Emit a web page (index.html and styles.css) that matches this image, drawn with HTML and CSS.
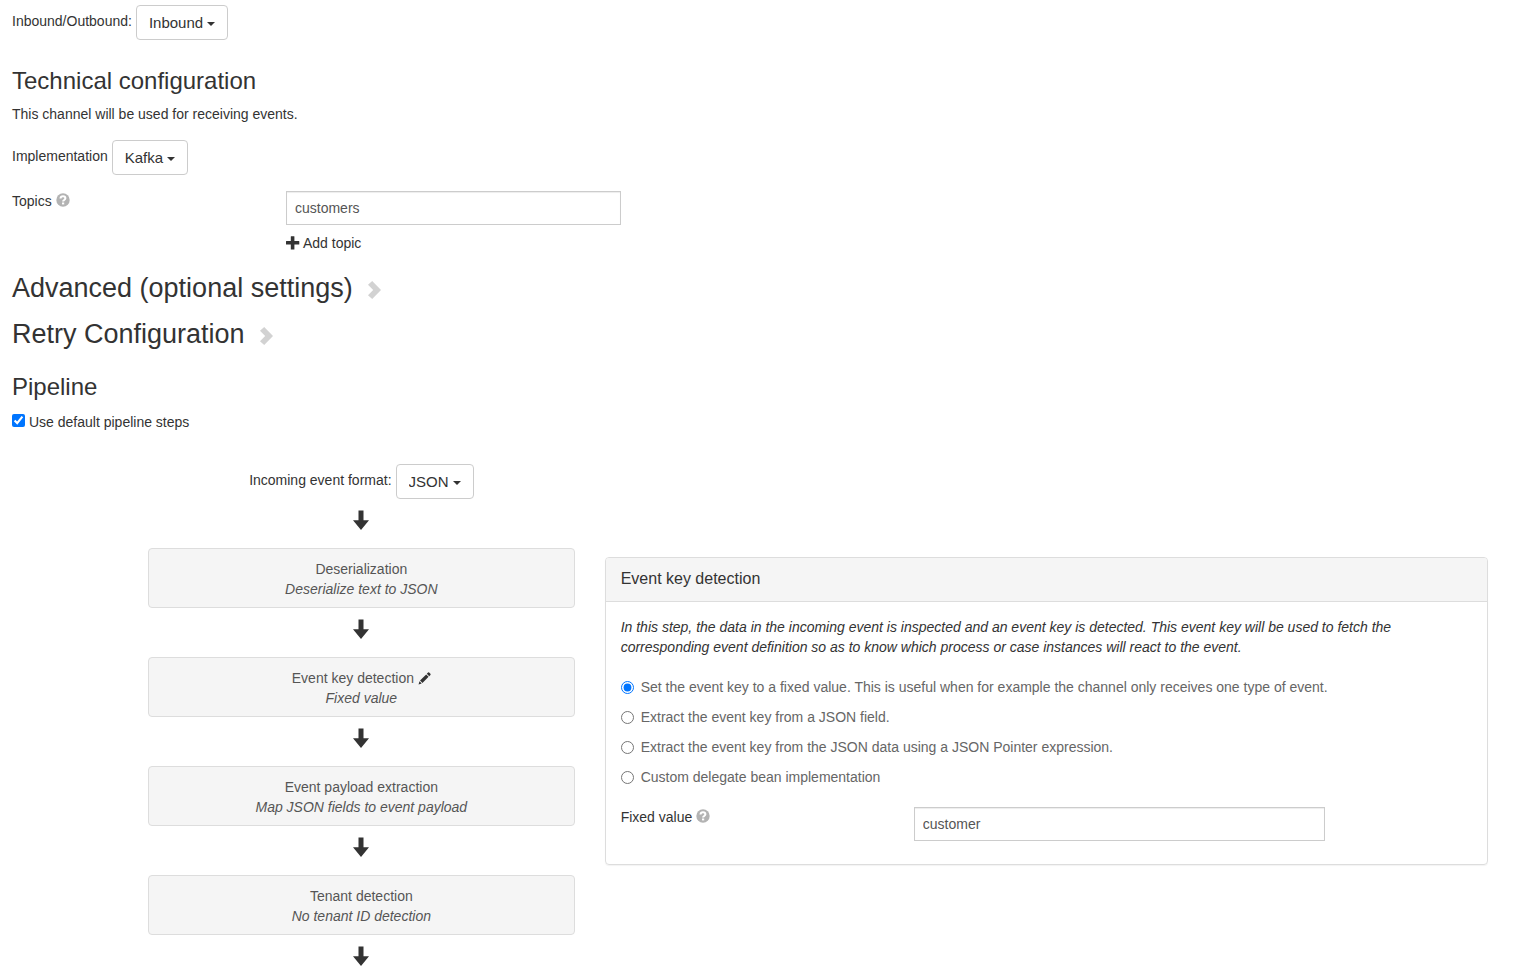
FILE: index.html
```
<!DOCTYPE html>
<html lang="en">
<head>
<meta charset="utf-8">
<title>Channel configuration</title>
<link rel="stylesheet" href="styles.css">
</head>
<body>
<svg class="sprite" aria-hidden="true">
  <symbol id="help" viewBox="0 0 14 14"><circle cx="7" cy="7" r="6.700" fill="#b3b3b3"/><path d="M4.500 5.500C4.600 3.900 5.600 3.200 7 3.200s2.400.8 2.400 2.100c0 1.700-2.300 1.600-2.300 3.200" fill="none" stroke="#fff" stroke-width="2"/><path d="M6 9.500h2.200v1.900H6z" fill="#fff"/></symbol>
  <symbol id="plus" viewBox="0 0 14 14"><path d="M4.800.5q0-.3.300-.3h3q.3 0 .3.300v4.600h4.600q.3 0 .3.300v2.900q0 .3-.3.300H8.400v4.600q0 .3-.3.300h-3q-.3 0-.3-.3V8.600H.3Q0 8.600 0 8.300V5.400q0-.3.300-.3h4.500z"/></symbol>
  <symbol id="chevron" viewBox="0 0 16 20"><path d="M5.200 1 14 10 5.200 19 1 15.200 6.200 10 1 4.800z"/></symbol>
  <symbol id="down" viewBox="0 0 16 20"><path d="M5.500.5h5v9.800H16L8 20 0 10.300h5.500z"/></symbol>
  <symbol id="pencil" viewBox="0 0 14 14"><path d="M.6 13.400 1.600 9.900 4 12.400zM2.200 9.200 8.800 2.600 11.400 5.200 4.800 11.800zM9.500 1.900 10.800.6Q11.400.1 12 .6L13.400 2Q13.900 2.600 13.400 3.200L12.100 4.500z"/></symbol>
</svg>
<main class="page">
  <div class="field-line">
    <label for="direction">Inbound/Outbound:</label>
    <span class="dropdown"><select id="direction"><option>Inbound</option></select></span>
  </div>

  <h3 class="title title-first">Technical configuration</h3>
  <p class="intro">This channel will be used for receiving events.</p>
  <div class="field-line">
    <label for="implementation">Implementation</label>
    <span class="dropdown"><select id="implementation"><option>Kafka</option></select></span>
  </div>

  <div class="topics">
    <div class="field-label"><label for="topic">Topics</label> <svg class="icon-help"><use href="#help"/></svg></div>
    <div class="topic-list">
      <input class="text-input" id="topic" type="text" value="customers">
      <button class="add" type="button"><svg class="icon-plus"><use href="#plus"/></svg>Add topic</button>
    </div>
  </div>

  <h2 class="section"><button type="button">Advanced (optional settings)<svg class="icon-chevron"><use href="#chevron"/></svg></button></h2>
  <h2 class="section"><button type="button">Retry Configuration<svg class="icon-chevron"><use href="#chevron"/></svg></button></h2>

  <h3 class="title">Pipeline</h3>
  <label class="check"><input type="checkbox" checked>Use default pipeline steps</label>

  <div class="pipeline">
    <div class="steps">
      <div class="field-line format">
        <label for="format">Incoming event format:</label>
        <span class="dropdown"><select id="format"><option>JSON</option></select></span>
      </div>
      <svg class="arrow"><use href="#down"/></svg>
      <div class="step">Deserialization<br><em>Deserialize text to JSON</em></div>
      <svg class="arrow"><use href="#down"/></svg>
      <div class="step">Event key detection <svg class="icon-pencil"><use href="#pencil"/></svg><br><em>Fixed value</em></div>
      <svg class="arrow"><use href="#down"/></svg>
      <div class="step">Event payload extraction<br><em>Map JSON fields to event payload</em></div>
      <svg class="arrow"><use href="#down"/></svg>
      <div class="step">Tenant detection<br><em>No tenant ID detection</em></div>
      <svg class="arrow"><use href="#down"/></svg>
    </div>

    <section class="panel">
      <h4 class="panel-head">Event key detection</h4>
      <div class="panel-body">
        <p class="description">In this step, the data in the incoming event is inspected and an event key is detected. This event key will be used to fetch the corresponding event definition so as to know which process or case instances will react to the event.</p>
        <label class="radio"><input type="radio" name="key" checked>Set the event key to a fixed value. This is useful when for example the channel only receives one type of event.</label>
        <label class="radio"><input type="radio" name="key">Extract the event key from a JSON field.</label>
        <label class="radio"><input type="radio" name="key">Extract the event key from the JSON data using a JSON Pointer expression.</label>
        <label class="radio"><input type="radio" name="key">Custom delegate bean implementation</label>
        <div class="fixed">
          <div class="field-label"><label for="fixed">Fixed value</label> <svg class="icon-help"><use href="#help"/></svg></div>
          <input class="text-input" id="fixed" type="text" value="customer">
        </div>
      </div>
    </section>
  </div>
</main>
</body>
</html>
```
FILE: styles.css
```
* { box-sizing: border-box; }
body {
  margin: 0;
  background: #fff;
  color: #333;
  font: 14px/20px "Helvetica Neue", Helvetica, "Liberation Sans", Arial, sans-serif;
}
input, select, button { font: inherit; color: inherit; }
.sprite { display: none; }
svg { fill: #333; }
.page { padding: 5px 26px 0 12px; }

.field-line { display: flex; align-items: flex-start; gap: 4px; }
.field-line label { padding-top: 6px; }
.dropdown { position: relative; display: inline-block; }
.dropdown select {
  appearance: none;
  display: block;
  height: 35px;
  padding: 0 23px 0 12px;
  border: 1px solid #ccc;
  border-radius: 4px;
  background: #fff;
  font-size: 15px;
}
.dropdown::after {
  content: "";
  position: absolute;
  right: 13px;
  top: 17px;
  border: 4px solid transparent;
  border-top-color: #333;
  border-bottom: 0;
  pointer-events: none;
}

.title { margin: 20px 0 10px; font-size: 24px; line-height: 26px; font-weight: 400; }
.title-first { margin-top: 28px; }
.intro { margin: 0 0 16px; }

.topics { display: grid; grid-template-columns: 274fr 335fr 867fr; margin-top: 16px; }
.field-label { display: flex; gap: 4px; align-items: center; height: 20px; }
.icon-help { width: 14px; height: 14px; margin-bottom: 2px; }
.text-input {
  display: block;
  width: 100%;
  height: 34px;
  padding: 0 8px;
  border: 1px solid #ccc;
  border-radius: 0;
  background: #fff;
  box-shadow: inset 0 1px 1px rgba(0, 0, 0, .075);
  color: #555;
}
.add { display: flex; align-items: center; gap: 3px; margin-top: 8px; padding: 0; border: 0; background: none; }
.icon-plus { width: 14px; height: 14px; }

.section { margin: 20px 0 16px; font-size: 27px; line-height: 30px; font-weight: 400; }
.section + .section { margin-top: 16px; }
.section button { display: flex; align-items: center; gap: 14px; padding: 0; border: 0; background: none; }
.icon-chevron { width: 16px; height: 20px; margin-top: 4px; fill: #d2d2d2; }
.section + .title { margin-top: 25px; }

.check { display: flex; gap: 4px; align-items: center; margin-top: 12px; }
.check input { width: 13px; height: 13px; margin: 0 0 3px; accent-color: #0075ff; }

.pipeline { display: grid; grid-template-columns: 1fr 2fr; align-items: start; margin: 32px -15px 0 121px; }
.steps { display: flex; flex-direction: column; padding: 0 15px; }
.format { justify-content: center; }
.arrow { align-self: center; width: 16px; height: 20px; margin: 11px 0 18px; }
.arrow:last-child { margin-bottom: 0; }
.step {
  padding: 10px 15px 8px;
  border: 1px solid #ddd;
  border-radius: 4px;
  background: #f5f5f5;
  color: #555;
  font-weight: 300;
  text-align: center;
}
.icon-pencil { width: 13px; height: 13px; vertical-align: -2px; }

.panel {
  margin: 93px 15px 0;
  border: 1px solid #ddd;
  border-radius: 4px;
  box-shadow: 0 1px 1px rgba(0, 0, 0, .05);
}
.panel-head {
  margin: 0;
  padding: 11px 15px 12px;
  border-bottom: 1px solid #ddd;
  border-radius: 3px 3px 0 0;
  background: #f5f5f5;
  font-size: 16px;
  font-weight: 400;
}
.panel-body { padding: 15px 15px 23px; }
.description { margin: 0 0 20px; font-style: italic; }
.radio { display: flex; align-items: center; gap: 7px; margin-bottom: 10px; color: #666; }
.radio input { width: 13px; height: 13px; margin: 0; accent-color: #0075ff; }
.fixed { display: grid; grid-template-columns: 293fr 411fr 147fr; margin-top: 20px; }
```
